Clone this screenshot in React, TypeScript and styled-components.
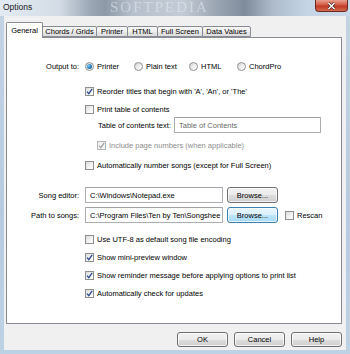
import React from 'react'
import styled, { createGlobalStyle } from 'styled-components'

const GlobalStyle = createGlobalStyle`
  html, body {
    margin: 0;
    padding: 0;
  }
  body {
    width: 350px;
    height: 354px;
    overflow: hidden;
    font-family: "Liberation Sans", Arial, sans-serif;
    font-size: 7.5px;
    color: #000;
  }
`

const WindowFrame = styled.div`
  width: 350px;
  height: 354px;
  box-sizing: border-box;
  padding: 0 4px 4px 4px;
  display: flex;
  flex-direction: column;
  background: linear-gradient(180deg, #c4d4e4 0%, #b7cbe0 60%, #bed2e6 100%);
`

const TitleBar = styled.div`
  position: relative;
  height: 16px;
  margin: 0 -4px;
  padding-left: 3px;
  display: flex;
  align-items: center;
  overflow: hidden;
  background: linear-gradient(90deg, #e3eaf2 0%, #d3dce6 17%, #9aa6b4 26%, #8d99a7 30%, #b6c0cc 38%,
    #c3ccd6 52%, #9aa5b2 62%, #7f8c9b 70%, #aebccb 78%, #c5d5e5 88%, #c9d9ea 100%);
`

const TitleText = styled.span`
  position: relative;
  z-index: 1;
  font-size: 8.5px;
  margin-top: -2px;
  color: #1a1a1a;
`

const Watermark = styled.span`
  position: absolute;
  left: 110px;
  top: 0;
  line-height: 15px;
  font-family: "Liberation Serif", "Times New Roman", serif;
  font-size: 15px;
  letter-spacing: 2px;
  color: rgba(235, 240, 246, 0.5);
  filter: blur(0.6px);
`

const CloseButton = styled.div`
  position: absolute;
  right: 2px;
  top: 0;
  width: 33px;
  height: 12px;
  border: 1px solid #6d2a22;
  border-top: none;
  border-radius: 0 0 4px 4px;
  box-sizing: border-box;
  background: linear-gradient(180deg, #e8a08e 0%, #d35a45 45%, #c13a26 55%, #d46a4e 100%);
  display: flex;
  align-items: center;
  justify-content: center;
`

const ClientArea = styled.div`
  flex: 1;
  background: #f0f0f0;
  padding: 6px 4px 0 2px;
  display: flex;
  flex-direction: column;
`

const TabStrip = styled.div`
  display: flex;
  align-items: flex-end;
  height: 15px;
  padding-left: 1px;
  position: relative;
  z-index: 1;
`

const Tab = styled.div<{ $width: number; $selected?: boolean }>`
  width: ${p => p.$width}px;
  height: ${p => (p.$selected ? 16 : 11)}px;
  box-sizing: border-box;
  border: 1px solid #898c95;
  border-bottom: ${p => (p.$selected ? 'none' : '1px solid #898c95')};
  margin-left: -1px;
  margin-bottom: ${p => (p.$selected ? -1 : 0)}px;
  border-radius: 2px 2px 0 0;
  background: ${p => (p.$selected ? '#ffffff' : 'linear-gradient(180deg, #f6f6f6 0%, #f0f0f0 50%, #e6e6e6 51%, #dedede 100%)')};
  display: flex;
  align-items: ${p => (p.$selected ? 'flex-start' : 'center')};
  padding-top: ${p => (p.$selected ? 3 : 0)}px;
  justify-content: center;
  white-space: nowrap;
  position: relative;
  z-index: ${p => (p.$selected ? 2 : 1)};
`

const Panel = styled.div`
  height: 287px;
  box-sizing: border-box;
  border: 1px solid #898c95;
  background: #ffffff;
  padding: 20px 0 0 6px;
  display: flex;
  flex-direction: column;
`

const Row = styled.div<{ $mt?: number; $indent?: number }>`
  display: flex;
  align-items: center;
  height: 16px;
  margin-top: ${p => p.$mt ?? 0}px;
  padding-left: ${p => p.$indent ?? 0}px;
  white-space: nowrap;
`

const FieldLabel = styled.span`
  width: 66px;
  margin-right: 6px;
  text-align: right;
  flex-shrink: 0;
`

const InlineLabel = styled.span`
  margin-right: 3px;
`

const TextBox = styled.div<{ $width: number; $muted?: boolean }>`
  width: ${p => p.$width}px;
  height: 16px;
  box-sizing: border-box;
  border: 1px solid #abadb3;
  border-top-color: #a0a2a8;
  border-radius: 1px;
  background: #fff;
  padding-left: 4px;
  display: flex;
  align-items: center;
  overflow: hidden;
  color: ${p => (p.$muted ? '#6a6a6a' : '#000')};
`

const PushButton = styled.div<{ $focused?: boolean; $width?: number; $height?: number }>`
  width: ${p => p.$width ?? 51}px;
  height: ${p => p.$height ?? 16}px;
  box-sizing: border-box;
  border: 1px solid ${p => (p.$focused ? '#3c7fb1' : '#707070')};
  border-radius: 3px;
  background: ${p =>
    p.$focused
      ? 'linear-gradient(180deg, #eaf6fd 0%, #d9f0fc 50%, #bee6fd 51%, #a7d9f5 100%)'
      : 'linear-gradient(180deg, #f2f2f2 0%, #ebebeb 50%, #dddddd 51%, #cfcfcf 100%)'};
  box-shadow: inset 0 0 0 1px rgba(255, 255, 255, 0.7);
  display: flex;
  align-items: center;
  justify-content: center;
  flex-shrink: 0;
`

const Box = styled.span<{ $disabled?: boolean }>`
  width: 9px;
  height: 9px;
  box-sizing: border-box;
  border: 1px solid ${p => (p.$disabled ? '#b5b5b5' : '#8e8f8f')};
  background: ${p => (p.$disabled ? '#f4f4f4' : 'linear-gradient(135deg, #dcdcdc 0%, #f4f4f4 60%, #ffffff 100%)')};
  display: inline-flex;
  align-items: center;
  justify-content: center;
  flex-shrink: 0;
  margin-right: 3px;
`

const CheckText = styled.span<{ $disabled?: boolean }>`
  color: ${p => (p.$disabled ? '#8d8d8d' : '#000')};
`

const RadioOption = styled.span<{ $width?: number }>`
  display: inline-flex;
  align-items: center;
  width: ${p => (p.$width ? `${p.$width}px` : 'auto')};
  flex-shrink: 0;
`

const RadioCircle = styled.span`
  width: 9px;
  height: 9px;
  box-sizing: border-box;
  border-radius: 50%;
  border: 1px solid #8e8f8f;
  background: linear-gradient(135deg, #d6d6d6 0%, #f2f2f2 60%, #ffffff 100%);
  display: inline-flex;
  align-items: center;
  justify-content: center;
  margin-right: 3px;
`

const RadioDot = styled.span`
  width: 5px;
  height: 5px;
  border-radius: 50%;
  background: radial-gradient(circle at 35% 35%, #8ad1ff 0%, #2a86c8 45%, #0d3f76 100%);
`

const ButtonBar = styled.div`
  display: flex;
  justify-content: flex-end;
  gap: 6px;
  margin-top: 8px;
`

type CheckProps = {
  checked?: boolean
  disabled?: boolean
  children: React.ReactNode
}

const CheckBox = ({ checked, disabled, children }: CheckProps) => (
  <>
    <Box $disabled={disabled}>
      {checked && (
        <svg width="7" height="7" viewBox="0 0 7 7">
          <path d="M1 3.6 L2.8 5.6 L6.2 0.8" fill="none" stroke={disabled ? '#a3a3a3' : '#2b4a8c'} strokeWidth="1.3" />
        </svg>
      )}
    </Box>
    <CheckText $disabled={disabled}>{children}</CheckText>
  </>
)

const Radio = ({ label, selected, width }: { label: string; selected?: boolean; width?: number }) => (
  <RadioOption $width={width}>
    <RadioCircle>{selected && <RadioDot />}</RadioCircle>
    {label}
  </RadioOption>
)

const tabs = [
  { name: 'General', width: 37, selected: true },
  { name: 'Chords / Grids', width: 55 },
  { name: 'Printer', width: 32 },
  { name: 'HTML', width: 31 },
  { name: 'Full Screen', width: 46 },
  { name: 'Data Values', width: 49 }
]

export default function App() {
  return (
    <>
      <GlobalStyle />
      <WindowFrame>
        <TitleBar>
          <Watermark>SOFTPEDIA</Watermark>
          <TitleText>Options</TitleText>
          <CloseButton>
            <svg width="9" height="8" viewBox="0 0 9 8">
              <path d="M1.5 1 L7.5 7 M7.5 1 L1.5 7" stroke="#3a1a16" strokeWidth="2.6" />
              <path d="M1.5 1 L7.5 7 M7.5 1 L1.5 7" stroke="#ffffff" strokeWidth="1.5" />
            </svg>
          </CloseButton>
        </TitleBar>
        <ClientArea>
          <TabStrip>
            {tabs.map(t => (
              <Tab key={t.name} $width={t.width} $selected={t.selected}>
                {t.name}
              </Tab>
            ))}
          </TabStrip>
          <Panel>
            <Row>
              <FieldLabel>Output to:</FieldLabel>
              <Radio label="Printer" selected width={49} />
              <Radio label="Plain text" width={55} />
              <Radio label="HTML" width={48} />
              <Radio label="ChordPro" />
            </Row>
            <Row $mt={9} $indent={72}>
              <CheckBox checked>Reorder titles that begin with 'A', 'An', or 'The'</CheckBox>
            </Row>
            <Row $mt={2} $indent={72}>
              <CheckBox>Print table of contents</CheckBox>
            </Row>
            <Row $mt={0} $indent={85}>
              <InlineLabel>Table of contents text:</InlineLabel>
              <TextBox $width={147} $muted>Table of Contents</TextBox>
            </Row>
            <Row $mt={4} $indent={84}>
              <CheckBox checked disabled>Include page numbers (when applicable)</CheckBox>
            </Row>
            <Row $mt={4} $indent={72}>
              <CheckBox>Automatically number songs (except for Full Screen)</CheckBox>
            </Row>
            <Row $mt={14}>
              <FieldLabel>Song editor:</FieldLabel>
              <TextBox $width={138}>C:\Windows\Notepad.exe</TextBox>
              <PushButton style={{ marginLeft: 4 }}>Browse...</PushButton>
            </Row>
            <Row $mt={4}>
              <FieldLabel>Path to songs:</FieldLabel>
              <TextBox $width={138}>C:\Program Files\Ten by Ten\Songshee</TextBox>
              <PushButton $focused style={{ marginLeft: 4, marginRight: 7 }}>Browse...</PushButton>
              <CheckBox>Rescan</CheckBox>
            </Row>
            <Row $mt={8} $indent={72}>
              <CheckBox>Use UTF-8 as default song file encoding</CheckBox>
            </Row>
            <Row $mt={2} $indent={72}>
              <CheckBox checked>Show mini-preview window</CheckBox>
            </Row>
            <Row $mt={2} $indent={72}>
              <CheckBox checked>Show reminder message before applying options to print list</CheckBox>
            </Row>
            <Row $mt={2} $indent={72}>
              <CheckBox checked>Automatically check for updates</CheckBox>
            </Row>
          </Panel>
          <ButtonBar>
            <PushButton $height={15}>OK</PushButton>
            <PushButton $height={15}>Cancel</PushButton>
            <PushButton $height={15}>Help</PushButton>
          </ButtonBar>
        </ClientArea>
      </WindowFrame>
    </>
  )
}
